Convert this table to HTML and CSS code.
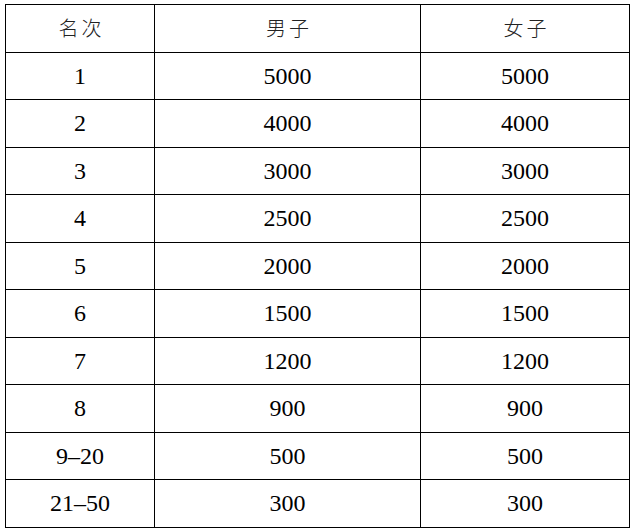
FILE: index.html
```html
<!DOCTYPE html>
<html lang="zh">
<head>
<meta charset="utf-8">
<title>奖金</title>
<link rel="stylesheet" href="styles.css">
</head>
<body>
<div class="wrap">
<table class="prize">
<colgroup><col class="c1"><col class="c2"><col class="c3"></colgroup>
<thead>
<tr><th><span class="zh">名次</span></th><th><span class="zh">男子</span></th><th><span class="zh">女子</span></th></tr>
</thead>
<tbody>
<tr><td>1</td><td>5000</td><td>5000</td></tr>
<tr><td>2</td><td>4000</td><td>4000</td></tr>
<tr><td>3</td><td>3000</td><td>3000</td></tr>
<tr><td>4</td><td>2500</td><td>2500</td></tr>
<tr><td>5</td><td>2000</td><td>2000</td></tr>
<tr><td>6</td><td>1500</td><td>1500</td></tr>
<tr><td>7</td><td>1200</td><td>1200</td></tr>
<tr><td>8</td><td>900</td><td>900</td></tr>
<tr><td>9&#8211;20</td><td>500</td><td>500</td></tr>
<tr><td>21&#8211;50</td><td>300</td><td>300</td></tr>
</tbody>
</table>
</div>
</body>
</html>
```
FILE: styles.css
```css
html, body {
  margin: 0;
  padding: 0;
  background: #ffffff;
}
.wrap {
  padding: 4px 0 0 5px;
}
.prize {
  border-collapse: collapse;
  table-layout: fixed;
  width: 624px;
  font-family: "Liberation Serif", "Noto Sans CJK SC", serif;
  font-size: 24px;
  color: #000;
}
.c1 { width: 149px; }
.c2 { width: 266px; }
.c3 { width: 209px; }
.prize th,
.prize td {
  border: 1px solid #000;
  height: 46.5px;
  padding: 0;
  text-align: center;
  vertical-align: middle;
  font-weight: normal;
  line-height: 24px;
}
.zh {
  font-family: "Noto Sans CJK SC", sans-serif;
  font-size: 20px;
  font-weight: 300;
  letter-spacing: 3px;
  padding-left: 3px;
  color: #222;
}
```
